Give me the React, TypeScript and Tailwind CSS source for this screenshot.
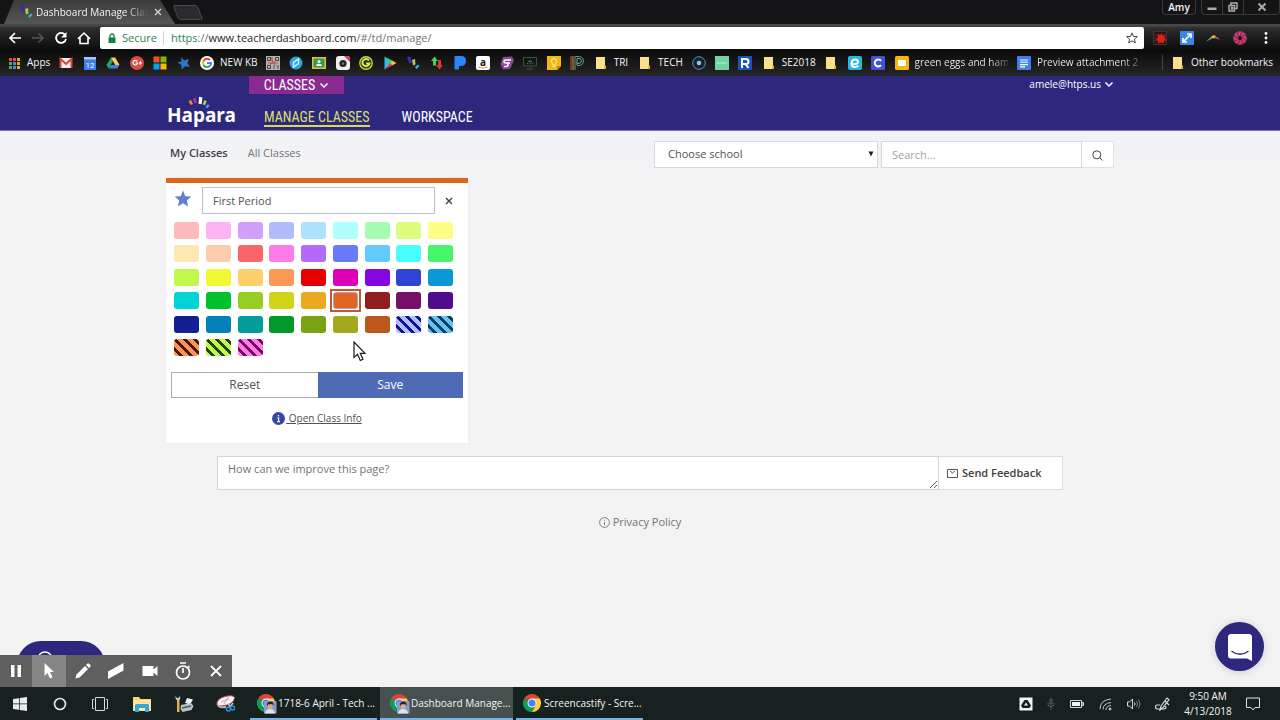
import type { ReactNode } from "react"

type Bookmark = {
  title: string
  icon: ReactNode
  label?: string
  width?: string
  fade?: boolean
}

const Icon14 = ({ children }: { children: ReactNode }) => (
  <svg viewBox="0 0 14 14" className="size-3.5 shrink-0" aria-hidden="true">
    {children}
  </svg>
)

const Folder = () => (
  <Icon14>
    <path d="M2 1h9v8.500l1 .5v3H2z" fill="#fbe08a" />
    <path d="M10.500 9.500L12 10v3h-2z" fill="#d9b04c" />
  </Icon14>
)

const HaparaMark = () => (
  <Icon14>
    <path d="M1 1l3.500-.5 1.500 6-3 1z" fill="#37309a" />
    <path d="M6 4l3-1 .5 5.500-2.500 1z" fill="#b5c94a" />
    <path d="M9 11l3-2.500 1.500 1.500-3 3z" fill="#35b3e0" />
  </Icon14>
)

const bookmarks: Bookmark[] = [
  {
    title: "Apps",
    label: "Apps",
    width: "w-[23px]",
    icon: (
      <Icon14>
        {["#d9534a", "#d9534a", "#e8a13a", "#58a65c", "#4a8fd0", "#e8a13a", "#58a65c", "#4a8fd0", "#d0b040"].map((c, i) => (
          <rect key={i} x={2 + (i % 3) * 4} y={2 + Math.floor(i / 3) * 4} width="3" height="3" fill={c} />
        ))}
      </Icon14>
    ),
  },
  {
    title: "Gmail",
    icon: (
      <Icon14>
        <rect x="1" y="2" width="12" height="10" rx="1" fill="#f4f0ee" />
        <path d="M1.500 12V3L7 8l5.500-5v9" fill="none" stroke="#d9443a" strokeWidth="2" />
      </Icon14>
    ),
  },
  {
    title: "Calendar",
    icon: (
      <Icon14>
        <rect x="1" y="1" width="12" height="13" fill="#3f7de8" />
        <path d="M1 1h12v2.500H1z" fill="#a9c6f7" />
        <text x="7" y="11.500" textAnchor="middle" fontSize="8" fontFamily="Roboto, sans-serif" fill="#fff">12</text>
      </Icon14>
    ),
  },
  {
    title: "Drive",
    icon: (
      <Icon14>
        <path d="M5 1.500L.5 9l2.200 3.500L7 5z" fill="#2aa567" />
        <path d="M5 1.500h4.200L13.500 9H9.200z" fill="#fcd04c" />
        <path d="M4.800 9h8.700l-2.200 3.500H2.700z" fill="#3f7de8" />
      </Icon14>
    ),
  },
  {
    title: "Google+",
    icon: (
      <Icon14>
        <circle cx="7" cy="7" r="7" fill="#dc4a3e" />
        <path d="M7.200 5.300A2.300 2.300 0 1 0 7.600 7H5.400M10.300 5.300v3.400M8.700 7h3.300" fill="none" stroke="#fff" strokeWidth="1.200" />
      </Icon14>
    ),
  },
  {
    title: "Microsoft",
    icon: (
      <Icon14>
        <path d="M.5.500h6v6h-6z" fill="#f25022" />
        <path d="M7.500.5h6v6h-6z" fill="#7fba00" />
        <path d="M.5 7.500h6v6h-6z" fill="#00a4ef" />
        <path d="M7.500 7.500h6v6h-6z" fill="#ffb900" />
      </Icon14>
    ),
  },
  {
    title: "Favorites",
    icon: (
      <Icon14>
        <path d="M4 1l3 3.200L12 3l-1.600 4L13 11l-4.800-.8L4.500 13.500 4.300 9 .5 6.500l4-1z" fill="#2d74c4" />
      </Icon14>
    ),
  },
  {
    title: "NEW KB",
    label: "NEW KB",
    width: "w-[36px]",
    icon: (
      <Icon14>
        <circle cx="7" cy="7" r="7" fill="#fff" />
        <g fill="none" strokeWidth="2">
          <path d="M10 4A4 4 0 0 0 3.500 5" stroke="#ea4335" />
          <path d="M3.500 5a4 4 0 0 0 0 4" stroke="#fbbc05" />
          <path d="M3.500 9A4 4 0 0 0 9.700 10" stroke="#34a853" />
          <path d="M9.700 10A4 4 0 0 0 11 7H7" stroke="#4285f4" />
        </g>
      </Icon14>
    ),
  },
  {
    title: "QR code",
    icon: (
      <Icon14>
        <rect width="14" height="14" fill="#b9b1b1" />
        <path d="M1.500 1.500h3v3h-3zM9.500 1.500h3v3h-3zM1.500 9.500h3v3h-3z" fill="none" stroke="#444" />
        <path d="M6 1v4M8 9v4M10 10h3M11 12h2" stroke="#555" />
        <path d="M2 7h10M6 5l3 4M4 8.500l5-3" stroke="#d2474c" strokeWidth="1.200" />
      </Icon14>
    ),
  },
  {
    title: "Safari",
    icon: (
      <Icon14>
        <circle cx="7" cy="7" r="6.500" fill="#27a5ea" />
        <path d="M4.500 11V6.500L9.500 3v4.500z" fill="none" stroke="#d5effc" strokeWidth="1.500" />
      </Icon14>
    ),
  },
  {
    title: "Classroom",
    icon: (
      <Icon14>
        <rect y="1" width="14" height="12" fill="#f2bd2c" />
        <rect x="1.500" y="2.500" width="11" height="9" fill="#2c9c5c" />
        <circle cx="7" cy="5.500" r="1.500" fill="#fff" />
        <path d="M4 10c0-3 6-3 6 0z" fill="#fff" />
      </Icon14>
    ),
  },
  {
    title: "Camera",
    icon: (
      <Icon14>
        <rect width="14" height="14" rx="3" fill="#f1eef0" />
        <path d="M8 0h3q3 0 3 3v3z" fill="#d93a6b" />
        <circle cx="7" cy="7.500" r="3.600" fill="#222" />
        <circle cx="7" cy="7.500" r="1.200" fill="#777" />
      </Icon14>
    ),
  },
  {
    title: "GoGuardian",
    icon: (
      <Icon14>
        <circle cx="7" cy="7" r="6.200" fill="#2c3216" stroke="#c3d93f" strokeWidth="1.400" />
        <path d="M10 4.500A3.600 3.600 0 1 0 10.500 7.500H7" fill="none" stroke="#d7e84e" strokeWidth="2" />
      </Icon14>
    ),
  },
  {
    title: "Play",
    icon: (
      <Icon14>
        <path d="M1.500.5l6.500 6.500-6.500 6.500z" fill="#25c1f0" />
        <path d="M1.500.5L10 5 7.500 7.500z" fill="#36cf7b" />
        <path d="M1.500 13.500L10 9 7.500 6.500z" fill="#ee3d4c" />
        <path d="M9.500 4.700L13.500 7l-4 2.300L7.300 7z" fill="#fdc530" />
      </Icon14>
    ),
  },
  { title: "Hapara", icon: <HaparaMark /> },
  {
    title: "Transfers",
    icon: (
      <Icon14>
        <path d="M1 5l3.500-4.500L8 5H6v4.500H3V5z" fill="#49d05d" />
        <path d="M6 9l3.500 4.500L13 9h-2V4H8v5z" fill="#cf3b38" />
      </Icon14>
    ),
  },
  {
    title: "Pandora",
    icon: (
      <Icon14>
        <path d="M1.500 0H8q5 0 5 5t-5 5H6v3.500H1.500z" fill="#2a86f2" />
      </Icon14>
    ),
  },
  {
    title: "Amazon",
    icon: (
      <Icon14>
        <rect width="14" height="14" rx="2" fill="#fff" />
        <text x="7" y="10" textAnchor="middle" fontSize="10" fontWeight="700" fontFamily="Open Sans, sans-serif" fill="#111">a</text>
        <path d="M2.500 11q4.500 2.400 9 0" fill="none" stroke="#f1a02c" />
      </Icon14>
    ),
  },
  {
    title: "Flipgrid",
    icon: (
      <Icon14>
        <path d="M3 1l9-.5 2 4L10 13l-7 .5L.5 8z" fill="#8d4599" />
        <path d="M11 4H5.500Q4 4 4 5.500T5.500 7H10M8 7v1.500Q8 10.500 6 10.500H4" fill="none" stroke="#fff" strokeWidth="1.600" />
      </Icon14>
    ),
  },
  {
    title: "Monitor",
    icon: (
      <Icon14>
        <path d="M.5 1.500h13v8.500H.5zM7 10v3M3.500 13h7" fill="none" stroke="#34563a" />
        <path d="M4 7.500h1M6.500 7.500h1M9 7.500h1M6.500 4.500h1M5 5.700h4" stroke="#4b7c50" />
      </Icon14>
    ),
  },
  {
    title: "Keep",
    icon: (
      <Icon14>
        <path d="M0 0h14v10l-4 4H0z" fill="#f5b714" />
        <path d="M14 10l-4 4v-4z" fill="#c98c0a" />
        <path d="M5.500 9V7.500a2.700 2.700 0 1 1 3 0V9zM5.500 10.500h3" fill="none" stroke="#fff3c9" />
      </Icon14>
    ),
  },
  {
    title: "PBS",
    icon: (
      <Icon14>
        <path d="M1 0v14" stroke="#c95b3a" />
        <path d="M3 0v14" stroke="#d0a048" />
        <path d="M5 14V.5h4a4 4 0 0 1 0 9H7" fill="none" stroke="#58a07c" />
        <path d="M7 9V2.500h2a2.300 2.300 0 0 1 0 4.800H7" fill="none" stroke="#6fb3a2" />
      </Icon14>
    ),
  },
  { title: "TRI", label: "TRI", width: "w-[15px]", icon: <Folder /> },
  { title: "TECH", label: "TECH", width: "w-[24px]", icon: <Folder /> },
  {
    title: "Radar",
    icon: (
      <Icon14>
        <circle cx="7" cy="7" r="6.300" fill="#12222f" stroke="#5c93b4" strokeWidth="1" />
        <circle cx="7" cy="7" r="2.300" fill="#8fc3e6" />
      </Icon14>
    ),
  },
  {
    title: "Notes",
    icon: (
      <Icon14>
        <rect width="14" height="14" fill="#74d3a4" />
        <path d="M2 7h10" stroke="#b5ead0" strokeWidth="1.500" strokeDasharray="2 .5" />
      </Icon14>
    ),
  },
  {
    title: "Reading",
    icon: (
      <Icon14>
        <rect width="14" height="14" fill="#1555b5" />
        <path d="M4 12V3h4a2.300 2.300 0 0 1 0 5H5M7.500 8l3 4" fill="none" stroke="#fff" strokeWidth="2" />
      </Icon14>
    ),
  },
  { title: "SE2018", label: "SE2018", width: "w-[33px]", icon: <Folder /> },
  { title: "Folder", icon: <Folder /> },
  {
    title: "Edpuzzle",
    icon: (
      <Icon14>
        <rect width="14" height="14" rx="2" fill="#27b8e0" />
        <path d="M4 8q6 .5 6-2T7 3.500 3.500 7.200 7 11q2 0 3.500-1.200" fill="none" stroke="#fff" strokeWidth="1.900" />
      </Icon14>
    ),
  },
  {
    title: "Clever",
    icon: (
      <Icon14>
        <rect width="14" height="14" rx="1.500" fill="#3f52d8" />
        <path d="M10 4.800a3.500 3.500 0 1 0 0 4.400" fill="none" stroke="#fff" strokeWidth="2" />
      </Icon14>
    ),
  },
  {
    title: "green eggs and ham",
    label: "green eggs and ham",
    width: "w-[93px]",
    fade: true,
    icon: (
      <Icon14>
        <rect width="14" height="14" rx="1.500" fill="#f3b60f" />
        <rect x="3" y="4" width="8" height="6" fill="#fff" />
      </Icon14>
    ),
  },
  {
    title: "Preview attachment 2",
    label: "Preview attachment 2",
    width: "w-[103px]",
    fade: true,
    icon: (
      <Icon14>
        <rect width="14" height="14" rx="1" fill="#3f80ea" />
        <path d="M3 4h8M3 6.300h8M3 8.600h8M3 10.900h5" stroke="#fff" strokeWidth="1.100" />
      </Icon14>
    ),
  },
]

const swatches = [
  "bg-[#fdb9bb]", "bg-[#fdb4f3]", "bg-[#d0a0fb]", "bg-[#b3bcfb]", "bg-[#aee3fd]", "bg-[#aefffd]", "bg-[#a5fdb3]", "bg-[#dcfd80]", "bg-[#fefd87]",
  "bg-[#fde7b2]", "bg-[#fdcbad]", "bg-[#fb6567]", "bg-[#fd7ce8]", "bg-[#b46afa]", "bg-[#6a7bfa]", "bg-[#64c9fb]", "bg-[#49fffd]", "bg-[#45f768]",
  "bg-[#c1f84b]", "bg-[#f0f838]", "bg-[#fdd06c]", "bg-[#fd9859]", "bg-[#e80000]", "bg-[#dd00b7]", "bg-[#8407e2]", "bg-[#3143d3]", "bg-[#0c98d3]",
  "bg-[#00d4d6]", "bg-[#00c22e]", "bg-[#98cd22]", "bg-[#d1d51a]", "bg-[#eaa91f]", "bg-[#e36522]", "bg-[#901d1f]", "bg-[#750f67]", "bg-[#4f0d8c]",
  "bg-[#131f95]", "bg-[#0380b9]", "bg-[#009d9c]", "bg-[#00992a]", "bg-[#78a414]", "bg-[#a2a81b]", "bg-[#bd581c]",
  "bg-[repeating-linear-gradient(45deg,#b3bcfb_0_4px,#0d1193_4px_7px)]",
  "bg-[repeating-linear-gradient(45deg,#64c3f4_0_4px,#0b405c_4px_7px)]",
  "bg-[repeating-linear-gradient(45deg,#fd9259_0_4px,#4a1404_4px_7px)]",
  "bg-[repeating-linear-gradient(45deg,#c1f84b_0_4px,#234306_4px_7px)]",
  "bg-[repeating-linear-gradient(45deg,#fd7ce8_0_4px,#74085f_4px_7px)]",
]

const SELECTED = 32

function Chevron() {
  return (
    <svg viewBox="0 0 10 10" className="size-2.5" aria-hidden="true">
      <path d="M1.500 3.500L5 7l3.500-3.500" fill="none" stroke="currentColor" strokeWidth="1.500" />
    </svg>
  )
}

function BrowserChrome() {
  return (
    <div className="shrink-0 bg-[#141416] font-['Open_Sans','Noto_Sans',sans-serif] text-[10px] text-gray-100">
      <div className="flex h-6 items-start justify-between">
        <div className="flex items-start pl-1">
          <div className="flex h-6 w-[171px] items-center bg-linear-to-b from-[#3c3c3c] to-[#555] pr-3 pl-[15px] [clip-path:polygon(10px_0,156px_0,171px_100%,0_100%)]">
            <HaparaMark />
            <span className="ml-[3px] w-[112px] whitespace-nowrap [mask-image:linear-gradient(to_right,#000_80%,transparent)]">
              Dashboard Manage Clas
            </span>
            <button type="button" aria-label="Close tab" className="ml-1.5 text-gray-300">
              <svg viewBox="0 0 8 8" className="size-2">
                <path d="M1 1l6 6M7 1L1 7" stroke="currentColor" strokeWidth="1.300" />
              </svg>
            </button>
          </div>
          <button type="button" aria-label="New tab" className="mt-[5px] -ml-0.5">
            <svg viewBox="0 0 30 16" className="h-4 w-[30px]">
              <path d="M2 .5h20q2 0 3 2L29 13q.5 1.500-1.500 1.500H8q-2 0-3-2L.8 2Q.5.500 2 .5z" fill="#2b2b2d" stroke="#4a4a4a" />
            </svg>
          </button>
        </div>
        <div className="flex items-start gap-[5px]">
          <button type="button" className="h-[15px] w-[34px] rounded-b border border-t-0 border-[#3a3a3a] text-[10px] leading-[14px] font-semibold">
            Amy
          </button>
          <div className="flex h-[15px] rounded-b border border-t-0 border-[#3a3a3a] text-gray-300">
            <button type="button" aria-label="Minimize" className="flex w-[21px] items-center justify-center border-r border-[#3a3a3a]">
              <svg viewBox="0 0 10 10" className="size-2.5"><path d="M.5 5.500h9v2.500h-9z" fill="#aaa" /></svg>
            </button>
            <button type="button" aria-label="Restore" className="flex w-[21px] items-center justify-center border-r border-[#3a3a3a]">
              <svg viewBox="0 0 10 10" className="size-2.5" fill="none" stroke="#aaa" strokeWidth="1.500">
                <path d="M3 3V1h6v5.500H7" />
                <path d="M1 3.500h5.500V9H1zM3.500 5.500h1v1.500h-1z" />
              </svg>
            </button>
            <button type="button" aria-label="Close" className="flex w-[35px] items-center justify-center">
              <svg viewBox="0 0 10 10" className="size-2.5"><path d="M1.500 1.500l7 7M8.500 1.500l-7 7" stroke="#aaa" strokeWidth="2" /></svg>
            </button>
          </div>
        </div>
      </div>

      <div className="flex h-7 items-center bg-linear-to-b from-[#484848] from-5% via-[#2c2c2c] via-15% to-[#0a0a0a]">
        <div className="flex w-[100px] items-center gap-[9px] pl-2">
          <button type="button" aria-label="Back">
            <svg viewBox="0 0 14 14" className="size-3.5" fill="none" stroke="#fff" strokeWidth="1.700"><path d="M13 7H2M7 2L2 7l5 5" /></svg>
          </button>
          <button type="button" aria-label="Forward">
            <svg viewBox="0 0 14 14" className="size-3.5" fill="none" stroke="#555" strokeWidth="1.500"><path d="M1 7h11M7.500 2.500L12 7l-4.500 4.500" /></svg>
          </button>
          <button type="button" aria-label="Reload">
            <svg viewBox="0 0 14 14" className="size-3.5">
              <path d="M11 3.700A5 5 0 1 0 12 8" fill="none" stroke="#fff" strokeWidth="1.800" />
              <path d="M12.500 1v5.500H7z" fill="#fff" />
            </svg>
          </button>
          <button type="button" aria-label="Home">
            <svg viewBox="0 0 14 14" className="size-3.5" fill="none" stroke="#fff" strokeWidth="1.600"><path d="M1 7.800L7 2l6 5.800M3 6.500v6h8v-6" /></svg>
          </button>
        </div>
        <div className="flex h-[22px] min-w-0 flex-1 items-center rounded-xs bg-white pr-1.5 pl-2 text-[11px]">
          <svg viewBox="0 0 8 10" className="h-2.5 w-2" aria-hidden="true">
            <path d="M2 5V3a2 2 0 0 1 4 0v2" fill="none" stroke="#1a7d43" strokeWidth="1.300" />
            <path d="M.5 4.500h7V10h-7z" fill="#1a7d43" />
          </svg>
          <span className="ml-1.5 w-[34px] text-[#2b8350]">Secure</span>
          <span className="mx-[7px] h-3.5 w-px bg-gray-300" />
          <span className="min-w-0 flex-1 text-neutral-500">
            <span className="text-[#2b8350]">https</span>://<span className="text-neutral-800">www.teacherdashboard.com</span>/#/td/manage/
          </span>
          <button type="button" aria-label="Bookmark this page">
            <svg viewBox="0 0 12 12" className="size-3"><path d="M6 .9l1.500 3.500 3.800.3-2.900 2.500.9 3.700L6 8.900l-3.300 2 .9-3.700L.7 4.700l3.800-.3z" fill="none" stroke="#444" /></svg>
          </button>
        </div>
        <div className="flex w-[136px] items-center justify-between pr-[7px] pl-[9px]">
          <button type="button" aria-label="Recorder">
            <Icon14>
              <path d="M.5.500h13v13H.5zM.5 4h13M.5 7h13M.5 10h13" fill="#241818" stroke="#4a3030" />
              <path d="M5 3l2 1.500L8.500 2l1 2.500L12 4l-.5 3 1.500 2-2 .8-.5 2.400-2.500-.8-2.500 1L5 10 3 8.500 4.800 7z" fill="#ee1b10" />
            </Icon14>
          </button>
          <button type="button" aria-label="Resize">
            <Icon14>
              <rect width="14" height="14" rx="1" fill="#3c86e8" />
              <path d="M4 10l6-6M7 3h4v4M3 7v4h4" fill="none" stroke="#fff" strokeWidth="1.700" />
            </Icon14>
          </button>
          <button type="button" aria-label="Highlighter">
            <Icon14>
              <path d="M0 10.500L5 6l1.500 1.500z" fill="#3eb4a0" />
              <path d="M4.500 6.500Q7 3 10 5L8.500 7.500z" fill="#e7b84a" />
              <path d="M9 5q3 1 5 4l-5-2z" fill="#c9603f" />
            </Icon14>
          </button>
          <button type="button" aria-label="Screencastify">
            <Icon14>
              <circle cx="7" cy="7" r="6.800" fill="#cf3d79" />
              <circle cx="7" cy="7" r="2" fill="#20131a" />
              <path d="M7 5Q7 2 10 1.500M9 7q3 0 3.500 3M7 9q0 3-3 3.500M5 7Q2 7 1.500 4M8.500 5.500Q10.500 3.500 13 5M5.500 8.500Q3.500 10.500 1 9M8.500 8.500q2 2 .5 4.500M5.500 5.500Q3.500 3.500 5 1" fill="none" stroke="#5a1d38" strokeWidth=".8" />
            </Icon14>
          </button>
          <button type="button" aria-label="Chrome menu">
            <Icon14>
              <circle cx="7" cy="2.500" r="1.400" fill="#fff" />
              <circle cx="7" cy="7" r="1.400" fill="#fff" />
              <circle cx="7" cy="11.500" r="1.400" fill="#fff" />
            </Icon14>
          </button>
        </div>
      </div>

      <nav aria-label="Bookmarks" className="flex h-6 items-center justify-between bg-linear-to-b from-[#0d0d0d] to-[#262628] pr-[11px] pb-[3px] pl-[7px]">
        <div className="flex max-w-[1133px] flex-1 items-center justify-between">
          {bookmarks.map((b, i) => (
            <a key={i} href="#" title={b.title} className="flex items-center gap-1.5">
              {b.icon}
              {b.label && (
                <span className={`${b.width} whitespace-nowrap ${b.fade ? "bg-linear-to-r from-gray-100 from-80% to-gray-600 bg-clip-text text-transparent" : ""}`}>
                  {b.label}
                </span>
              )}
            </a>
          ))}
        </div>
        <a href="#" className="flex items-center gap-1.5 border-l border-[#444] pl-2">
          <Folder />
          <span className="w-[78px] whitespace-nowrap">Other bookmarks</span>
        </a>
      </nav>
    </div>
  )
}

function Header() {
  return (
    <header className="shrink-0 border-b border-[#7b75ae] bg-[#2d277d] text-white">
      <div className="mx-auto flex h-[54px] max-w-[948px] items-start">
        <a href="#" aria-label="Hapara" className="flex w-[83px] flex-col items-start pt-5 pl-px">
          <svg viewBox="0 0 26 13" className="ml-[20px] h-[13px] w-[26px]" aria-hidden="true">
            <path d="M1.500 5l2.600-1 1.800 4-2.400 1z" fill="#ef8a2f" />
            <path d="M5.800 2.500l2.800-.8 1.400 5-2.600.8z" fill="#9a3a9c" />
            <path d="M12 .8l3.400.6-.8 6.800-3-.5z" fill="#fff" />
            <path d="M17.300 4l2.600 1.300-2 4-2.200-1.100z" fill="#b7cf3f" />
            <path d="M20.800 8l2 1.800-2.700 2.700-1.700-1.600z" fill="#2fa8e0" />
          </svg>
          <span className="-mt-1.5 font-['Noto_Sans','Open_Sans',sans-serif] text-[19px] leading-6 font-bold">Hapara</span>
        </a>
        <div className="font-['Roboto_Condensed',Roboto,sans-serif] text-[14px] font-normal">
          <button type="button" className="flex h-[18px] w-[95px] items-center justify-center gap-1 bg-[#8a2a90]">
            CLASSES <Chevron />
          </button>
          <nav className="mt-[15px] flex items-start gap-8 pl-[15px] leading-4">
            <a href="#" className="border-b-2 border-[#d5dc52] text-[#dbe06a]">MANAGE CLASSES</a>
            <a href="#">WORKSPACE</a>
          </nav>
        </div>
        <button type="button" className="mr-0 ml-auto flex items-center gap-[3px] font-['Open_Sans',sans-serif] text-[10px] leading-4">
          amele@htps.us <Chevron />
        </button>
      </div>
    </header>
  )
}

function ClassCard() {
  return (
    <section aria-label="First Period" className="w-[302px] border-t-5 border-[#dc6522] bg-white px-[5px] pb-[17px] shadow-[0_0_2px_rgba(0,0,0,0.06)]">
      <div className="flex items-center pt-1 pl-[3px]">
        <button type="button" aria-label="Favorite" className="-mt-1">
          <svg viewBox="0 0 18 18" className="size-[18px]">
            <path d="M9 .5l2.300 5.700 6 .4-4.600 3.900 1.500 6L9 13.200l-5.200 3.300 1.500-6L.7 6.600l6-.4z" fill="#5e7fcb" />
          </svg>
        </button>
        <input
          type="text"
          aria-label="Class name"
          defaultValue="First Period"
          className="ml-2.5 h-[27px] w-[233px] border border-[#b5c3cb] px-2.5 text-[11px] text-neutral-600"
        />
        <button type="button" aria-label="Close" className="ml-2.5 text-neutral-700">
          <svg viewBox="0 0 8 8" className="size-2"><path d="M1 1l6 6M7 1L1 7" stroke="currentColor" strokeWidth="1.400" /></svg>
        </button>
      </div>

      <div className="mt-2 ml-[3px] grid h-[134px] w-[279px] grid-cols-[repeat(9,25px)] content-between justify-between">
        {swatches.map((color, i) => (
          <button
            key={i}
            type="button"
            aria-label={`Color ${i + 1}`}
            aria-pressed={i === SELECTED}
            className={`h-[17px] rounded-[3px] ${color} ${
              i === SELECTED
                ? "relative border border-[#a9a3cc] after:absolute after:-inset-1 after:border-2 after:border-[#c4582a] after:content-['']"
                : ""
            }`}
          />
        ))}
      </div>

      <div className="mt-4 flex text-[12px]">
        <button type="button" className="h-[26px] flex-1 border border-r-0 border-[#adadad] text-neutral-600">Reset</button>
        <button type="button" className="h-[26px] flex-1 bg-[#4f6bb5] text-white">Save</button>
      </div>

      <a href="#" className="mt-3 flex items-center justify-center gap-px text-[10px] leading-4 text-neutral-600">
        <svg viewBox="0 0 13 13" className="size-[13px]" aria-hidden="true">
          <circle cx="6.500" cy="6.500" r="6.500" fill="#3548a8" />
          <path d="M6.500 3v1.500M5.300 6h1.300v3.500M5.200 9.700h2.700" stroke="#fff" strokeWidth="1.200" fill="none" />
        </svg>
        <span className="underline">&nbsp;Open Class Info</span>
      </a>
    </section>
  )
}

function RecorderBar() {
  return (
    <div className="absolute bottom-0 left-0 flex h-8 w-[232px] bg-[#5f5f5f] text-white">
      <button type="button" aria-label="Pause" className="flex w-8 items-center justify-center">
        <svg viewBox="0 0 12 14" className="h-3.5 w-3"><path d="M1 1h3.500v12H1zM7.500 1H11v12H7.500z" fill="#fff" /></svg>
      </button>
      <button type="button" aria-label="Pointer" className="flex w-[34px] items-center justify-center bg-[#858585]">
        <svg viewBox="0 0 12 16" className="h-4 w-3"><path d="M1.500 0v13l3-3 2.500 5.500 2.500-1.200L7 9h4z" fill="#fff" /></svg>
      </button>
      <button type="button" aria-label="Pen" className="flex w-[33px] items-center justify-center">
        <svg viewBox="0 0 16 16" className="size-4"><path d="M.5 15.500l1-4L10 3l3 3-8.500 8.500zM11 2l1.500-1.500q.8-.6 1.600.2l1.200 1.200q.8.800.2 1.600L14 5z" fill="#fff" /></svg>
      </button>
      <button type="button" aria-label="Eraser" className="flex w-[34px] items-center justify-center">
        <svg viewBox="0 0 18 16" className="h-4 w-[18px]"><path d="M1 8.500L16.500 0v7.500L1 16z" fill="#fff" /></svg>
      </button>
      <button type="button" aria-label="Camera" className="flex w-[33px] items-center justify-center">
        <svg viewBox="0 0 16 12" className="h-3 w-4"><path d="M.5 1h11v3.500L15.500 1v10l-4-3.500V11H.5z" fill="#fff" /></svg>
      </button>
      <button type="button" aria-label="Timer" className="flex w-[34px] items-center justify-center">
        <svg viewBox="0 0 16 18" className="h-[18px] w-4" fill="none" stroke="#fff" strokeWidth="1.700"><circle cx="8" cy="10.500" r="6.500" /><path d="M5 1h6M8 6v5M13 4l1.500 1.500" /></svg>
      </button>
      <button type="button" aria-label="Close toolbar" className="flex w-[32px] items-center justify-center">
        <svg viewBox="0 0 12 12" className="size-3"><path d="M1 1l10 10M11 1L1 11" stroke="#fff" strokeWidth="1.800" /></svg>
      </button>
    </div>
  )
}

function ChromeIcon({ avatar }: { avatar?: boolean }) {
  return (
    <svg viewBox="0 0 21 21" className="size-[21px] shrink-0" aria-hidden="true">
      <path d="M10 10L2.200 5.500A9 9 0 0 1 17.800 5.500z" fill="#db4437" />
      <path d="M10 10L2.200 5.500A9 9 0 0 0 10 19l4-7z" fill="#0f9d58" />
      <path d="M10 5.500h7.800A9 9 0 0 1 10 19l4-7z" fill="#ffcd40" />
      <circle cx="10" cy="10" r="4.500" fill="#f5f5f5" />
      <circle cx="10" cy="10" r="3.500" fill="#4285f4" />
      {avatar && (
        <>
          <path d="M8 8h12.500v12.500H8z" fill="#8c9bc6" />
          <path d="M9 20.500q.5-4.500 5-4.500t5 4.500z" fill="#dfe3ee" />
          <path d="M12 10.500h4.500v4q-2 3.500-4.500 0z" fill="#d9a98c" />
          <path d="M11 13q-.5-4.500 3.300-4.500T17.500 13l-1-1.800h-4z" fill="#2a2022" />
        </>
      )}
    </svg>
  )
}

function Taskbar() {
  return (
    <footer className="flex h-[33px] shrink-0 items-stretch bg-[#17211f] font-['Open_Sans','Noto_Sans',sans-serif] text-[10px] text-gray-100">
      <button type="button" aria-label="Start" className="flex w-10 items-center justify-center">
        <svg viewBox="0 0 14 14" className="size-3.5" fill="#e8ecec"><path d="M0 2l6-.8v5.400H0zM6.700 1.100L14 0v6.600H6.700zM0 7.300h6v5.500L0 12zM6.700 7.300H14V14l-7.300-1z" /></svg>
      </button>
      <button type="button" aria-label="Cortana" className="flex w-10 items-center justify-center">
        <svg viewBox="0 0 14 14" className="size-3.5"><circle cx="7" cy="7" r="5.500" fill="none" stroke="#e8ecec" strokeWidth="1.600" /></svg>
      </button>
      <button type="button" aria-label="Task view" className="flex w-10 items-center justify-center">
        <svg viewBox="0 0 16 14" className="h-3.5 w-4" fill="none" stroke="#d5dada"><path d="M3.500.500h9v13h-9zM2 2.500H.5v9H2M14 2.500h1.500v9H14" /></svg>
      </button>
      <button type="button" aria-label="File Explorer" className="flex w-11 items-center justify-center">
        <svg viewBox="0 0 18 16" className="h-4 w-[18px]">
          <path d="M0 1h6l1.500 2H18v12H0z" fill="#f6d36d" />
          <path d="M0 4h18v11H0z" fill="#fce59a" />
          <path d="M2 16V9.500Q2 8 3.500 8h11Q16 8 16 9.500V16h-4v-4H6v4z" fill="#35a5dd" />
        </svg>
      </button>
      <button type="button" aria-label="Fax and Scan" className="flex w-10 items-center justify-center">
        <svg viewBox="0 0 20 18" className="h-[18px] w-5">
          <path d="M3 5h2.500v12H3z" fill="#e0b040" />
          <path d="M1.500 1l1.500 2 1.500 0L6 1q1 3-1.500 4.500h-1Q1 4 1.500 1z" fill="#bcd4e4" />
          <path d="M11 8l2-5 6 1.500-3 5z" fill="#f0f5f8" />
          <path d="M7 10l10-2 2.500 3-2 4-9 2-2-3z" fill="#b9c4ca" />
          <path d="M8 13l9-2" stroke="#4e5a60" strokeWidth="1.500" />
        </svg>
      </button>
      <button type="button" aria-label="Snipping Tool" className="flex w-11 items-center justify-center">
        <svg viewBox="0 0 20 18" className="h-[18px] w-5">
          <path d="M1 10Q0 4 9 1.500q8-2 9.500 1Q18 8 11 10t-10 0z" fill="#f2f2f4" stroke="#c54a54" />
          <path d="M2 10q1 3 8 2" stroke="#b5b8bc" strokeWidth="2" fill="none" />
          <path d="M5 7l8-3M8 9l4-7" stroke="#dba4aa" />
          <path d="M12 8l2.500 5M17 8l-4 5" stroke="#cfd8de" strokeWidth="1.300" />
          <circle cx="12.500" cy="14" r="2" fill="none" stroke="#2f8fd0" strokeWidth="1.500" />
          <circle cx="16.500" cy="13" r="2" fill="none" stroke="#2f8fd0" strokeWidth="1.500" />
        </svg>
      </button>
      <div className="ml-0.5 flex gap-[3px]">
        <button type="button" className="flex w-[127px] items-center gap-px border-b-2 border-[#76b0e6] pt-0.5 pl-1.5 whitespace-nowrap">
          <ChromeIcon avatar />
          1718-6 April - Tech ...
        </button>
        <button type="button" className="flex w-[133px] items-center gap-px border-b-2 border-[#76b0e6] bg-[#46504e] pt-0.5 pl-[9px] whitespace-nowrap">
          <ChromeIcon avatar />
          Dashboard Manage...
        </button>
        <button type="button" className="flex w-[127px] items-center gap-px border-b-2 border-[#76b0e6] pt-0.5 pl-1.5 whitespace-nowrap">
          <ChromeIcon />
          Screencastify - Scre...
        </button>
      </div>
      <div className="ml-auto flex items-center">
        <div className="flex w-[152px] items-center justify-between">
          <svg viewBox="0 0 14 14" className="size-3.5"><path d="M.5.500h13v13H.5z" fill="#f3f5f5" /><path d="M5.500 3h3l3.500 5.500L10.500 11h-7L2 8.500zM7 5.500L5 8.500h4z" fill="#17211f" fillRule="evenodd" /></svg>
          <svg viewBox="0 0 8 12" className="h-3 w-2" fill="none" stroke="#56605e"><path d="M3 1h2v5H3zM1 5v1.500q0 2 3 2t3-2V5M4 8.500V12" /></svg>
          <svg viewBox="0 0 14 10" className="h-2.5 w-3.5"><path d="M.5 1.500h11v7H.5zM12 3.500h1.500v3H12z" fill="none" stroke="#d5dada" /><path d="M2 3h8v4H2z" fill="#f0f0f0" /></svg>
          <svg viewBox="0 0 14 14" className="size-3.5" fill="none" stroke="#c2c8c7"><path d="M2 12Q2 3 13 2M5 12.500q0-6 8-7M8 13q0-4 5-4.500" /><circle cx="12" cy="12" r="1" fill="#c2c8c7" /></svg>
          <svg viewBox="0 0 14 12" className="h-3 w-3.5" fill="none" stroke="#d5dada"><path d="M.5 4h2l3-3v10l-3-3h-2zM7.500 4.500q1 1.500 0 3" /><path d="M9.500 3q2 3 0 6M11.500 1.500q3 4.500 0 9" stroke="#77807e" /></svg>
          <svg viewBox="0 0 16 14" className="h-3.5 w-4" fill="none" stroke="#d5dada" strokeWidth="1.200"><path d="M5 8H2.500Q.5 8 .5 10t2 2H8q3 0 3-1.500T9 9M5 13l1-4 6-8 2 1.500-6 8zM10 4l4 4" /></svg>
        </div>
        <time className="w-[74px] text-center leading-[15px]">
          9:50 AM
          <br />
          4/13/2018
        </time>
        <button type="button" aria-label="Notifications" className="w-[35px] pl-px">
          <svg viewBox="0 0 14 14" className="size-3.5" fill="none" stroke="#e0e4e4"><path d="M.5 1h13v9.500H9L7 13l-2-2.500H.5z" /></svg>
        </button>
      </div>
    </footer>
  )
}

export default function App() {
  return (
    <div className="flex min-h-screen flex-col bg-[#f3f3f3] font-['Open_Sans','Noto_Sans',sans-serif]">
      <BrowserChrome />
      <Header />
      <main className="relative flex-1 bg-linear-to-b from-[#f1f2f7] to-[#f3f3f3] to-10%">
        <div className="mx-auto max-w-[948px]">
          <div className="flex items-start justify-between pt-2.5 pl-1">
            <nav className="flex gap-5 pt-1 text-[11px] leading-4">
              <a href="#" className="font-semibold text-neutral-700">My Classes</a>
              <a href="#" className="text-neutral-500">All Classes</a>
            </nav>
            <form className="flex text-[11px] text-neutral-600">
              <div className="relative mr-[3px]">
                <select aria-label="School" className="h-[27px] w-[224px] appearance-none border border-[#d5d8dd] bg-white px-[13px]">
                  <option>Choose school</option>
                </select>
                <svg viewBox="0 0 6 6" className="pointer-events-none absolute top-2.5 right-1 size-1.5" aria-hidden="true">
                  <path d="M.5.500h5L3 5.500z" fill="#222" />
                </svg>
              </div>
              <input type="search" aria-label="Search" placeholder="Search..." className="h-[27px] w-[201px] border border-[#d5d8dd] bg-white px-2.5 placeholder:text-neutral-400" />
              <button type="submit" aria-label="Search classes" className="flex h-[27px] w-8 items-center justify-center border border-l-0 border-[#dfe1e4] bg-white">
                <svg viewBox="0 0 11 11" className="mt-0.5 size-[11px]" fill="none" stroke="#444"><circle cx="4.800" cy="4.800" r="4" /><path d="M7.700 7.700l2.800 2.800" /></svg>
              </button>
            </form>
          </div>
          <div className="mt-2.5">
            <ClassCard />
          </div>
        </div>

        <form className="mx-auto mt-[13px] flex max-w-[846px]">
          <textarea
            aria-label="Feedback"
            placeholder="How can we improve this page?"
            className="h-[34px] min-w-0 flex-1 border border-[#d4d4d4] bg-white px-2.5 py-1 text-[11px] leading-4 placeholder:text-neutral-500"
          />
          <button type="submit" className="flex w-[124px] items-center gap-1 border border-l-0 border-[#dcdcdc] bg-white pl-2 text-[11px] font-semibold text-neutral-700">
            <svg viewBox="0 0 11 9" className="h-[9px] w-[11px]" fill="none" stroke="#555" aria-hidden="true"><path d="M.5.500h10v8H.5zM3 2l2.500 2L8 2" /></svg>
            Send Feedback
          </button>
        </form>

        <div className="mt-6 flex justify-center">
          <a href="#" className="flex items-center gap-[3px] text-[11px] leading-4 text-neutral-500">
            <svg viewBox="0 0 11 11" className="size-[11px]" fill="none" stroke="currentColor" strokeWidth=".9" aria-hidden="true"><circle cx="5.500" cy="5.500" r="4.900" /><path d="M5.500 2.800v1M5.500 5v3.200" /></svg>
            Privacy Policy
          </a>
        </div>

        <svg viewBox="0 0 14 21" className="pointer-events-none absolute top-[210px] left-[353px] h-[21px] w-3.5" aria-hidden="true">
          <path d="M1 1v15.500l3.600-3.300 2.700 6.300 2.700-1.200-2.700-6H12z" fill="#fff" stroke="#1c1c1c" strokeWidth="1.200" />
        </svg>

        <button type="button" aria-label="Help" className="absolute bottom-0 left-[17px] flex h-[46px] w-[88px] justify-center rounded-t-[24px] bg-[#2d277d] pt-2.5 pr-8 text-white">
          <svg viewBox="0 0 16 16" className="size-4"><circle cx="8" cy="8" r="7" fill="none" stroke="currentColor" strokeWidth="1.500" /></svg>
        </button>
        <RecorderBar />
        <button type="button" aria-label="Open chat" className="absolute right-4 bottom-4 flex size-[49px] items-center justify-center rounded-full bg-[#2d277d] shadow-[0_1px_8px_rgba(0,0,0,0.15)]">
          <svg viewBox="0 0 24 27" className="mt-0.5 h-[27px] w-6">
            <path d="M3 0h18q3 0 3 3v24l-5-2.500H3q-3 0-3-3V3q0-3 3-3z" fill="#fff" />
            <path d="M4 17.500q8 5.500 16 0" fill="none" stroke="#2d277d" strokeWidth="1.500" strokeLinecap="round" />
          </svg>
        </button>
      </main>
      <Taskbar />
    </div>
  )
}
